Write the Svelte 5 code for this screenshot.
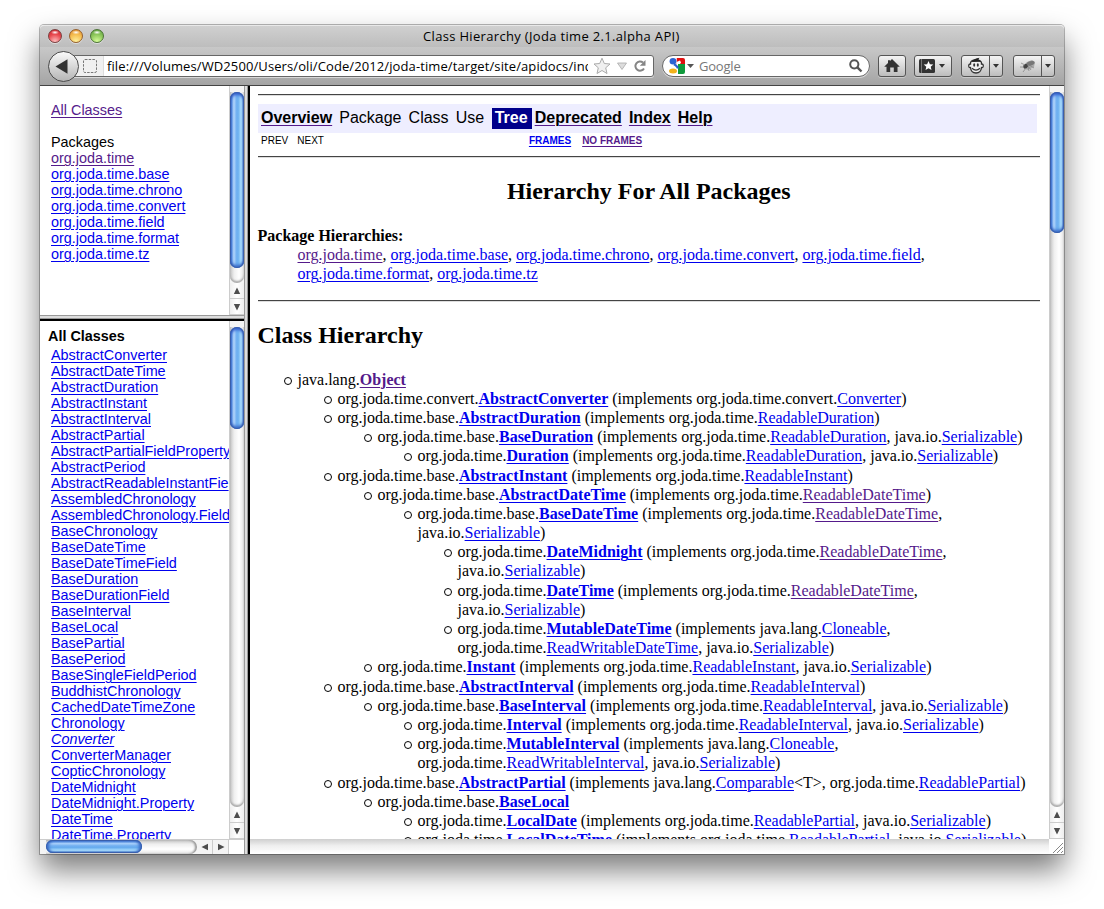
<script>
  const packages = ['org.joda.time', 'org.joda.time.base', 'org.joda.time.chrono', 'org.joda.time.convert', 'org.joda.time.field', 'org.joda.time.format', 'org.joda.time.tz'];

  const classes = ['AbstractConverter', 'AbstractDateTime', 'AbstractDuration', 'AbstractInstant', 'AbstractInterval', 'AbstractPartial', 'AbstractPartialFieldProperty', 'AbstractPeriod', 'AbstractReadableInstantFie', 'AssembledChronology', 'AssembledChronology.Field', 'BaseChronology', 'BaseDateTime', 'BaseDateTimeField', 'BaseDuration', 'BaseDurationField', 'BaseInterval', 'BaseLocal', 'BasePartial', 'BasePeriod', 'BaseSingleFieldPeriod', 'BuddhistChronology', 'CachedDateTimeZone', 'Chronology', 'Converter', 'ConverterManager', 'CopticChronology', 'DateMidnight', 'DateMidnight.Property', 'DateTime', 'DateTime.Property'];

  // *bold link*, ~bold visited link~, [link], {visited link}, / starts a new line
  const tree = [
    [0, 'java.lang.~Object~'],
    [1, 'org.joda.time.convert.*AbstractConverter* (implements org.joda.time.convert.[Converter])'],
    [1, 'org.joda.time.base.*AbstractDuration* (implements org.joda.time.[ReadableDuration])'],
    [2, 'org.joda.time.base.*BaseDuration* (implements org.joda.time.[ReadableDuration], java.io.[Serializable])'],
    [3, 'org.joda.time.*Duration* (implements org.joda.time.[ReadableDuration], java.io.[Serializable])'],
    [1, 'org.joda.time.base.*AbstractInstant* (implements org.joda.time.[ReadableInstant])'],
    [2, 'org.joda.time.base.*AbstractDateTime* (implements org.joda.time.{ReadableDateTime})'],
    [3, 'org.joda.time.base.*BaseDateTime* (implements org.joda.time.{ReadableDateTime},/java.io.[Serializable])'],
    [4, 'org.joda.time.*DateMidnight* (implements org.joda.time.{ReadableDateTime},/java.io.[Serializable])'],
    [4, 'org.joda.time.*DateTime* (implements org.joda.time.{ReadableDateTime},/java.io.[Serializable])'],
    [4, 'org.joda.time.*MutableDateTime* (implements java.lang.[Cloneable],/org.joda.time.[ReadWritableDateTime], java.io.[Serializable])'],
    [2, 'org.joda.time.*Instant* (implements org.joda.time.[ReadableInstant], java.io.[Serializable])'],
    [1, 'org.joda.time.base.*AbstractInterval* (implements org.joda.time.[ReadableInterval])'],
    [2, 'org.joda.time.base.*BaseInterval* (implements org.joda.time.[ReadableInterval], java.io.[Serializable])'],
    [3, 'org.joda.time.*Interval* (implements org.joda.time.[ReadableInterval], java.io.[Serializable])'],
    [3, 'org.joda.time.*MutableInterval* (implements java.lang.[Cloneable],/org.joda.time.[ReadWritableInterval], java.io.[Serializable])'],
    [1, 'org.joda.time.base.*AbstractPartial* (implements java.lang.[Comparable]<T>, org.joda.time.[ReadablePartial])'],
    [2, 'org.joda.time.base.*BaseLocal*'],
    [3, 'org.joda.time.*LocalDate* (implements org.joda.time.[ReadablePartial], java.io.[Serializable])'],
    [3, 'org.joda.time.*LocalDateTime* (implements org.joda.time.[ReadablePartial], java.io.[Serializable])']
  ];

  function parse(line) {
    return line.split(/(\*[^*]+\*|~[^~]+~|\[[^\]]+\]|\{[^}]+\})/).filter(Boolean).map((s) => {
      const c = s[0];
      if (!'*~[{'.includes(c)) return { text: s };
      return { text: s.slice(1, -1), link: true, bold: c === '*' || c === '~', seen: c === '~' || c === '{' };
    });
  }
</script>

{#snippet vbar(thumb)}
  <div class="vbar">
    <div class="vtrack"><div class="vthumb" style="height:{thumb}px"></div></div>
    <div class="arrow"><svg width="8" height="8"><path d="M4 0.5L7.2 7H0.8Z" fill="#4d4d4d" /></svg></div>
    <div class="arrow"><svg width="8" height="8"><path d="M4 7.5L7.2 1H0.8Z" fill="#4d4d4d" /></svg></div>
  </div>
{/snippet}

<div class="desktop">
<div class="window">
  <div class="titlebar">
    <i class="light red"></i><i class="light amber"></i><i class="light green"></i>
    <div class="title"><span>Class Hierarchy (Joda time 2.1.alpha API)</span></div>
  </div>
  <div class="toolbar">
    <div class="back"><svg width="31" height="31"><path d="M7.5 15.5L19.5 8.3V22.7Z" fill="#333" /></svg></div>
    <div class="url">
      <div class="ident"><svg width="14" height="14"><rect x="0.5" y="0.5" width="13" height="13" rx="1.5" fill="none" stroke="#777" stroke-dasharray="2.5 1.2" /></svg></div>
      <div class="address"><span>file:///Volumes/WD2500/Users/oli/Code/2012/joda-time/target/site/apidocs/ind</span></div>
      <svg class="urlicons" width="62" height="20">
        <path d="M12 2.2L14.3 7.5L20 8L15.7 11.8L17 17.5L12 14.5L7 17.5L8.3 11.8L4 8L9.7 7.5Z" fill="#f0f0f0" stroke="#aaa" />
        <path d="M27.5 7H36.5L32 13.5Z" fill="#ddd" stroke="#aaa" stroke-width=".8" />
        <path d="M53 6.6A4.6 4.6 0 1 0 54 12.4" fill="none" stroke="#858585" stroke-width="2" /><path d="M55.5 4V9.7H49.8Z" fill="#858585" />
      </svg>
    </div>
    <div class="search">
      <svg class="google" width="28" height="18">
        <path d="M8.5 1H15Q17 1 17 3V7H8.5Z" fill="#e01010" /><path d="M10 7H17V15Q17 17 15 17H10Z" fill="#109a3c" />
        <path d="M0 1H8.5V7H10V17H0Z" fill="#fff" /><ellipse cx="5" cy="4.2" rx="3.4" ry="3.3" fill="#2c62d2" /><path d="M6 7.3Q10 9.5 9.5 11.5" stroke="#2c62d2" stroke-width="2.2" fill="none" /><path d="M8.5 5L12 3.5L13 5.5L12 7H9Z" fill="#fff" /><ellipse cx="5" cy="14" rx="4" ry="2.5" fill="#f2b21b" />
        <path d="M19 7H26L22.5 11Z" fill="#555" />
      </svg>
      <span>Google</span>
      <svg width="16" height="16"><circle cx="6.3" cy="6.3" r="4.1" fill="none" stroke="#555" stroke-width="2" /><path d="M9.4 9.4L13.5 13.5" stroke="#555" stroke-width="2.4" /></svg>
    </div>
    <div class="btn home"><svg width="18" height="16"><path d="M9 1L16.8 8.7H14.5V14H10.8V9.5H7.2V14H3.5V8.7H1.2L5 5V2.2H7V3Z" fill="#333" /></svg></div>
    <div class="btn marks"><svg width="30" height="16"><rect x="1" y="1" width="16" height="14" rx="1.5" fill="#333" /><path d="M3.5 1V15" stroke="#777" /><path d="M10.5 3L11.9 6.2L15.3 6.5L12.7 8.7L13.5 12.1L10.5 10.3L7.5 12.1L8.3 8.7L5.7 6.5L9.1 6.2Z" fill="#fff" /><path d="M21 6H27L24 9.8Z" fill="#333" /></svg></div>
    <div class="btn split monkey">
      <div><svg width="18" height="18"><path d="M3.5 7Q3 3 9 3Q15 3 14.5 7Q17 7 16 10Q15.5 11 14.5 10.5Q14 16 9 16Q4 16 3.5 10.5Q2.5 11 2 10Q1 7 3.5 7Z" fill="#eee" stroke="#333" stroke-width="1.3" /><path d="M4.5 5Q6.5 1.5 12.5 .8L11.3 2.5L14.5 4.8Z" fill="#222" /><ellipse cx="7.2" cy="8" rx="1" ry="1.7" fill="#333" /><ellipse cx="10.8" cy="8" rx="1" ry="1.7" fill="#333" /><path d="M5 11.3Q9 14.8 13 11.3" fill="none" stroke="#333" stroke-width="1.2" /></svg></div>
      <b><svg width="8" height="6"><path d="M1 1H7L4 4.8Z" fill="#333" /></svg></b>
    </div>
    <div class="btn split bug">
      <div><svg width="18" height="16"><path d="M4 8L8 4L13 2L16 4L15 9L9 12L6 11Z" fill="#aaa" /><ellipse cx="6.5" cy="8" rx="2.6" ry="2.1" transform="rotate(-35 7 8)" fill="#444" /><path d="M2 5L6 7M1 9L5 9M4 14L7 10M10 13L9 9M15 10L10 7M12 12L9 8" stroke="#888" stroke-width=".8" /><ellipse cx="11.5" cy="5.5" rx="4" ry="2.1" transform="rotate(-15 11 5)" fill="#777" /></svg></div>
      <b><svg width="8" height="6"><path d="M1 1H7L4 4.8Z" fill="#333" /></svg></b>
    </div>
  </div>

  <div class="frames">
    <div class="side">
      <div class="pane top">
        <div class="doc packs">
          <a class="seen" href="#all">All Classes</a>
          <p>Packages</p>
          {#each packages as p, i}<a class:seen={i === 0} href="#{p}">{p}</a>{/each}
        </div>
        {@render vbar(176)}
      </div>
      <div class="hsplit"></div>
      <div class="pane bottom">
        <div class="doc list">
          <h4>All Classes</h4>
          {#each classes as c}<a class:iface={c === 'Converter'} href="#{c}">{c}</a>{/each}
        </div>
        {@render vbar(102)}
      </div>
      <div class="hbar">
        <div class="htrack"><div class="hthumb"></div></div>
        <div class="harrow"><svg width="8" height="8"><path d="M0.5 4L7 .8V7.2Z" fill="#4d4d4d" /></svg></div>
        <div class="harrow"><svg width="8" height="8"><path d="M7.5 4L1 .8V7.2Z" fill="#4d4d4d" /></svg></div>
        <div class="corner"></div>
      </div>
    </div>
    <div class="vsplit"></div>
    <div class="main">
      <div class="upper">
        <div class="content">
          <hr />
          <div class="nav">
            <a href="#overview">Overview</a><span>Package</span><span>Class</span><span>Use</span><b>Tree</b><a href="#deprecated">Deprecated</a><a href="#index">Index</a><a href="#help">Help</a>
          </div>
          <div class="subnav"><span>PREV</span><span>NEXT</span><a class="frm" href="#frames">FRAMES</a><a class="seen" href="#noframes">NO FRAMES</a></div>
          <hr />
          <h2 class="center">Hierarchy For All Packages</h2>
          <div class="ph"><b>Package Hierarchies:</b>
            <div class="phlist">{#each packages as p, i}<a class:seen={i === 0} href="#{p}-tree">{p}</a>{#if i < 6},{' '}{/if}{#if i === 4}<br />{/if}{/each}</div>
          </div>
          <hr />
          <h2>Class Hierarchy</h2>
          <div class="tree">
            {#each tree as [depth, src]}
              <div class="item" style="margin-left:{depth * 40}px">
                {#each src.split('/') as line}
                  <div class="line">{#each parse(line) as t}{#if t.link}<a class:bold={t.bold} class:seen={t.seen} href="#{t.text}">{t.text}</a>{:else}{t.text}{/if}{/each}</div>
                {/each}
              </div>
            {/each}
          </div>
        </div>
        {@render vbar(141)}
      </div>
      <div class="status">
        <svg width="15" height="15"><path d="M4 14L14 4M8 14L14 8M12 14L14 12" stroke="#888" /></svg>
      </div>
    </div>
  </div>
</div>
</div>

<style>
  :global(body) { background: #fff; }
  * { box-sizing: border-box; }
  .desktop { height: 909px; padding: 25px 0 0 40px; overflow: hidden; background: #fff; }
  a { color: #0000ee; text-decoration: underline; text-decoration-thickness: 1px; text-underline-offset: 2px; }
  a.seen { color: #551a8b; }
  .window { width: 1024px; height: 829px; border-radius: 4px 4px 0 0; display: flex; flex-direction: column; box-shadow: 0 0 0 1px rgba(0, 0, 0, .28), 0 16px 30px rgba(0, 0, 0, .52); background: #fff; }
  .titlebar { height: 22px; flex: none; display: flex; align-items: center; padding-left: 8px; gap: 7px; border-radius: 4px 4px 0 0; border-top: 1px solid #e9e9e9; background: linear-gradient(#d0d0d0, #bdbdbd); }
  .light { width: 14px; height: 14px; margin-top: -2px; border-radius: 50%; border: 1px solid #7a4040; flex: none; box-shadow: 0 1px 0 #ddd; }
  .red { background: radial-gradient(ellipse 4px 2px at 50% 20%, #fff, transparent), radial-gradient(circle at 50% 95%, #ffc0c0, #e84a50 55%, #c81e28); }
  .amber { border-color: #96602c; background: radial-gradient(ellipse 4px 2px at 50% 20%, #fff, transparent), radial-gradient(circle at 50% 95%, #fff3a0, #f5bd50 55%, #de8a30); }
  .green { border-color: #4c7436; background: radial-gradient(ellipse 4px 2px at 50% 20%, #fff, transparent), radial-gradient(circle at 50% 95%, #d8ff9c, #8cc65a 55%, #5a9c3c); }
  .title { flex: 1; padding-left: 312px; margin-top: -2px; font: 13px/20px "Open Sans", sans-serif; letter-spacing: .33px; color: #000; white-space: nowrap; }
  .toolbar { height: 39px; flex: none; display: flex; align-items: flex-start; padding: 8px 9px 0 8px; background: linear-gradient(#c8c8c8, #a4a4a4); border-bottom: 1px solid #444; font: 13px/20px "Open Sans", sans-serif; }
  .back { width: 31px; height: 31px; margin-top: -4px; border-radius: 50%; border: 1px solid #4b4b4b; background: linear-gradient(#fafafa, #b5b5b5); flex: none; position: relative; z-index: 1; }
  .back svg { display: block; margin: -1px; }
  .url { width: 580px; margin-left: -5px; height: 22px; border: 1px solid #666; border-radius: 0 3px 3px 0; background: #fff; display: flex; overflow: hidden; flex: none; box-shadow: 0 1px 0 #d8d8d8; }
  .ident { width: 29px; background: #f0f0f0; border-right: 1px solid #ddd; padding: 3px 0 0 8px; line-height: 0; flex: none; }
  .address { width: 484px; margin-right: 2px; padding-left: 3px; overflow: hidden; white-space: nowrap; color: #000; flex: none; letter-spacing: .1px; }
  .urlicons { flex: none; }
  .search { width: 208px; height: 22px; margin-left: 8px; border: 1px solid #666; border-radius: 11px; background: #fff; display: flex; align-items: center; padding: 0 5px 0 5px; color: #777; flex: none; box-shadow: 0 1px 0 #d8d8d8; }
  .search span { flex: 1; padding-left: 3px; letter-spacing: -.2px; }
  .btn { height: 22px; border: 1px solid #555; border-radius: 3px; background: linear-gradient(#f4f4f4, #bdbdbd); display: flex; align-items: center; justify-content: center; flex: none; box-shadow: 0 1px 0 #c8c8c8; }
  .home { width: 28px; margin-left: 8px; }
  .marks { width: 38px; margin-left: 8px; }
  .monkey, .bug { width: 42px; margin-left: 9px; }
  .bug { margin-left: 10px; }
  .split div { width: 28px; height: 20px; display: flex; align-items: center; justify-content: center; border-right: 1px solid #555; }
  .split b { flex: 1; display: flex; align-items: center; justify-content: center; }
  .frames { flex: 1; min-height: 0; display: flex; }
  .side { width: 204px; display: flex; flex-direction: column; }
  .pane { display: flex; overflow: hidden; }
  .top { height: 229px; }
  .hsplit { height: 6px; flex: none; background: linear-gradient(#999 1px, #ddd 1px, #ddd 3px, #999 3px, #999 4px, #000 4px); }
  .bottom { flex: 1; min-height: 0; }
  .doc { width: 189px; overflow: hidden; font: 14.4px/16px "Liberation Sans", sans-serif; color: #000; white-space: nowrap; }
  .doc a { display: block; }
  .packs { padding: 16px 0 0 11px; }
  .packs p { margin: 16px 0 0; }
  .list { padding: 7px 0 0 11px; }
  .list h4 { margin: 0 0 3px -3px; font-size: 14.4px; line-height: 16px; }
  .iface { font-style: italic; }
  .vbar { width: 15px; flex: none; display: flex; flex-direction: column; background: #f4f4f4; border-left: 1px solid #ccc; }
  .vtrack { flex: 1; margin-top: 6px; border-radius: 0 0 8px 8px; background: linear-gradient(90deg, #c4c4c4, #efefef 30%, #fff 65%, #e4e4e4); box-shadow: inset 0 -2px 2px #aaa; }
  .vthumb { border-radius: 7px; background: linear-gradient(90deg, #2a4fb8 0, #5b93e4 12%, #b4d6fb 28%, #74b2f2 45%, #6cb0f0 58%, #acdffd 80%, #5a92d4 100%); box-shadow: inset 0 0 1px 1px #3a5ea8, inset 0 3px 3px #3560d0, inset 0 -3px 3px #3d70cc; }
  .arrow { height: 16px; flex: none; display: flex; align-items: center; justify-content: center; border-bottom: 1px solid #ccc; background: linear-gradient(90deg, #eee, #fff, #eee); }
  .hbar { height: 15px; display: flex; background: #f4f4f4; border-top: 1px solid #ccc; flex: none; }
  .htrack { width: 151px; margin-left: 6px; border-radius: 0 8px 8px 0; background: linear-gradient(#c4c4c4, #efefef 30%, #fff 65%, #e4e4e4); box-shadow: inset -2px 0 2px #999; }
  .hthumb { width: 96px; height: 13px; border-radius: 7px; background: linear-gradient(#2a4fb8 0, #5b93e4 12%, #a9d0fa 28%, #70aef0 45%, #68acee 58%, #a8dcfc 80%, #4a82cc 100%); box-shadow: inset 0 0 1px 1px #3a5ea8, inset 3px 0 3px #3d70cc, inset -3px 0 3px #3d70cc; }
  .harrow { width: 16px; display: flex; align-items: center; justify-content: center; border-right: 1px solid #ccc; }
  .corner { flex: 1; background: #fff; }
  .vsplit { width: 6px; flex: none; background: linear-gradient(90deg, #999 1px, #ddd 1px, #ddd 3px, #999 3px, #999 4px, #000 4px); }
  .main { flex: 1; min-width: 0; display: flex; flex-direction: column; }
  .upper { flex: 1; min-height: 0; display: flex; }
  .content { flex: 1; min-width: 0; overflow: hidden; padding: 8px 9px 0 8px; font: 16px/19.2px "Liberation Serif", serif; color: #000; white-space: nowrap; }
  hr { margin: 0; height: 2px; border: 0; border-top: 1px solid #444; border-bottom: 1px solid #ddd; }
  .nav { height: 29px; margin: 8px 3px 0 0; background: #eeeeff; display: flex; align-items: flex-start; padding: 4px 0 0 3px; font: 16px/19px "Liberation Sans", sans-serif; gap: 7.1px; }
  .nav a { color: #000; font-weight: bold; text-decoration-color: #551a8b; }
  .nav b { background: #00008b; color: #fff; padding: 0 4px 0 3px; margin: 0 -4px 0 .4px; height: 21px; }
  .subnav { height: 23px; padding: 2px 0 0 3px; display: flex; gap: 9px; font: 10px/12px "Liberation Sans", sans-serif; }
  .subnav a { font-weight: bold; }
  .subnav .frm { margin-left: 196px; margin-right: 2px; }
  h2 { margin: 0 0 0 -.5px; font-size: 24px; line-height: 29px; }
  h2.center { text-align: center; margin-top: 19px; }
  .ph { margin: 19.6px 0 0 -.5px; height: 74.4px; }
  .phlist { margin-left: 40px; }
  .content h2:not(.center) { margin-top: 19px; }
  .tree { margin: 19.6px 0 0 39.5px; }
  .item { position: relative; }
  .item::before { content: ""; position: absolute; left: -13.5px; top: 7px; width: 6px; height: 6px; border: 1px solid #000; border-radius: 50%; }
  .line { height: 19.2px; }
  .bold { font-weight: bold; }
  .status { height: 15px; flex: none; background: linear-gradient(#cfcfcf, #efefef 45%, #fff); display: flex; justify-content: flex-end; }
  .status svg { background: #fff; }
</style>
